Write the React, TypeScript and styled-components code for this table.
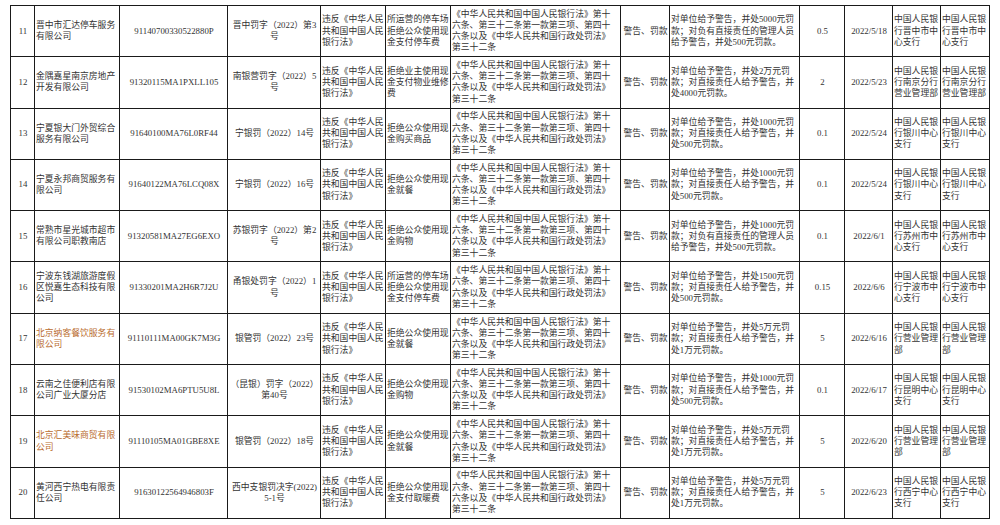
import React from "react";
import styled, { createGlobalStyle } from "styled-components";

const GlobalStyle = createGlobalStyle`
  html, body {
    margin: 0;
    padding: 0;
    background: #ffffff;
  }
  body {
    font-family: "Liberation Serif", "Noto Sans CJK SC", serif;
  }
`;

const Page = styled.div`
  padding: 5px 0 0 10px;
`;

const Table = styled.table`
  border-collapse: collapse;
  table-layout: fixed;
  width: 980px;
  font-family: "Liberation Serif", "Noto Sans CJK SC", serif;
  font-size: 8.8px;
  line-height: 11.2px;
  color: #333;
`;

const Col = styled.col<{ $w: number }>`
  width: ${(p) => p.$w}px;
`;

const Row = styled.tr`
  height: 51.3px;
`;

const Cell = styled.td<{ $align?: "left" | "center"; $orange?: boolean }>`
  padding: 0 0 0 1px;
  border: 1px solid #1a1a1a;
  vertical-align: middle;
  text-align: ${(p) => p.$align ?? "left"};
  white-space: pre-line;
  color: ${(p) => (p.$orange ? "#b96b2e" : "#333")};
  overflow: hidden;
`;

const widths = [24, 85, 108, 93, 65, 65, 170, 49, 130, 45, 48, 48, 49];

const VIOLATION = "违反《中华人民\n共和国中国人民\n银行法》";
const BASIS =
  "《中华人民共和国中国人民银行法》第十\n六条、第三十二条第一款第三项、第四十\n六条以及《中华人民共和国行政处罚法》\n第三十二条";

type Entry = {
  no: number;
  company: string;
  orange?: boolean;
  code: string;
  doc: string;
  behavior: string;
  content: string;
  amount: string;
  date: string;
  org: string;
};

const rows: Entry[] = [
  {
    no: 11,
    company: "晋中市汇达停车服务\n有限公司",
    code: "91140700330522880P",
    doc: "晋中罚字（2022）第3\n号",
    behavior: "所运营的停车场\n拒绝公众使用现\n金支付停车费",
    content: "对单位给予警告，并处5000元罚\n款；对负有直接责任的管理人员\n给予警告，并处500元罚款。",
    amount: "0.5",
    date: "2022/5/18",
    org: "中国人民银\n行晋中市中\n心支行",
  },
  {
    no: 12,
    company: "金隅嘉星南京房地产\n开发有限公司",
    code: "91320115MA1PXLL105",
    doc: "南银营罚字（2022）5\n号",
    behavior: "拒绝业主使用现\n金支付物业维修\n费",
    content: "对单位给予警告，并处2万元罚\n款；对直接责任人给予警告，并\n处4000元罚款。",
    amount: "2",
    date: "2022/5/23",
    org: "中国人民银\n行南京分行\n营业管理部",
  },
  {
    no: 13,
    company: "宁夏银大门外贸综合\n服务有限公司",
    code: "91640100MA76L0RF44",
    doc: "宁银罚（2022）14号",
    behavior: "拒绝公众使用现\n金购买商品",
    content: "对单位给予警告，并处1000元罚\n款；对直接责任人给予警告，并\n处500元罚款。",
    amount: "0.1",
    date: "2022/5/24",
    org: "中国人民银\n行银川中心\n支行",
  },
  {
    no: 14,
    company: "宁夏永邦商贸服务有\n限公司",
    code: "91640122MA76LCQ08X",
    doc: "宁银罚（2022）16号",
    behavior: "拒绝公众使用现\n金就餐",
    content: "对单位给予警告，并处1000元罚\n款；对直接责任人给予警告，并\n处500元罚款。",
    amount: "0.1",
    date: "2022/5/24",
    org: "中国人民银\n行银川中心\n支行",
  },
  {
    no: 15,
    company: "常熟市星光城市超市\n有限公司职教南店",
    code: "91320581MA27EG6EXO",
    doc: "苏银罚字（2022）第2\n号",
    behavior: "拒绝公众使用现\n金购物",
    content: "对单位给予警告，并处1000元罚\n款；对负有直接责任的管理人员\n给予警告，并处500元罚款。",
    amount: "0.1",
    date: "2022/6/1",
    org: "中国人民银\n行苏州市中\n心支行",
  },
  {
    no: 16,
    company: "宁波东钱湖旅游度假\n区悦嘉生态科技有限\n公司",
    code: "91330201MA2H6R7J2U",
    doc: "甬银处罚字（2022）1\n号",
    behavior: "所运营的停车场\n拒绝公众使用现\n金支付停车费",
    content: "对单位给予警告，并处1500元罚\n款；对直接责任人给予警告，并\n处500元罚款。",
    amount: "0.15",
    date: "2022/6/6",
    org: "中国人民银\n行宁波市中\n心支行",
  },
  {
    no: 17,
    company: "北京纳客餐饮服务有\n限公司",
    orange: true,
    code: "91110111MA00GK7M3G",
    doc: "银管罚（2022）23号",
    behavior: "拒绝公众使用现\n金就餐",
    content: "对单位给予警告，并处5万元罚\n款；对直接责任人给予警告，并\n处1万元罚款。",
    amount: "5",
    date: "2022/6/16",
    org: "中国人民银\n行营业管理\n部",
  },
  {
    no: 18,
    company: "云南之佳便利店有限\n公司广业大厦分店",
    code: "91530102MA6PTU5U8L",
    doc: "（昆银）罚字（2022）\n第40号",
    behavior: "拒绝公众使用现\n金购物",
    content: "对单位给予警告，并处1000元罚\n款；对直接责任人给予警告，并\n处500元罚款。",
    amount: "0.1",
    date: "2022/6/17",
    org: "中国人民银\n行昆明中心\n支行",
  },
  {
    no: 19,
    company: "北京汇美味商贸有限\n公司",
    orange: true,
    code: "91110105MA01GBE8XE",
    doc: "银管罚（2022）18号",
    behavior: "拒绝公众使用现\n金就餐",
    content: "对单位给予警告，并处5万元罚\n款；对直接责任人给予警告，并\n处1万元罚款。",
    amount: "5",
    date: "2022/6/20",
    org: "中国人民银\n行营业管理\n部",
  },
  {
    no: 20,
    company: "黄河西宁热电有限责\n任公司",
    code: "91630122564946803F",
    doc: "西中支银罚决字(2022)\n5-1号",
    behavior: "拒绝公众使用现\n金支付取暖费",
    content: "对单位给予警告，并处5万元罚\n款；对直接责任人给予警告，并\n处1万元罚款。",
    amount: "5",
    date: "2022/6/23",
    org: "中国人民银\n行西宁中心\n支行",
  },
];

export default function App() {
  return (
    <>
      <GlobalStyle />
      <Page>
        <Table>
          <colgroup>
            {widths.map((w, i) => (
              <Col key={i} $w={w} />
            ))}
          </colgroup>
          <tbody>
            {rows.map((r) => (
              <Row key={r.no}>
                <Cell $align="center">{r.no}</Cell>
                <Cell $orange={r.orange}>{r.company}</Cell>
                <Cell $align="center">{r.code}</Cell>
                <Cell $align="center">{r.doc}</Cell>
                <Cell>{VIOLATION}</Cell>
                <Cell>{r.behavior}</Cell>
                <Cell>{BASIS}</Cell>
                <Cell $align="center">警告、罚款</Cell>
                <Cell>{r.content}</Cell>
                <Cell $align="center">{r.amount}</Cell>
                <Cell $align="center">{r.date}</Cell>
                <Cell>{r.org}</Cell>
                <Cell>{r.org}</Cell>
              </Row>
            ))}
          </tbody>
        </Table>
      </Page>
    </>
  );
}
